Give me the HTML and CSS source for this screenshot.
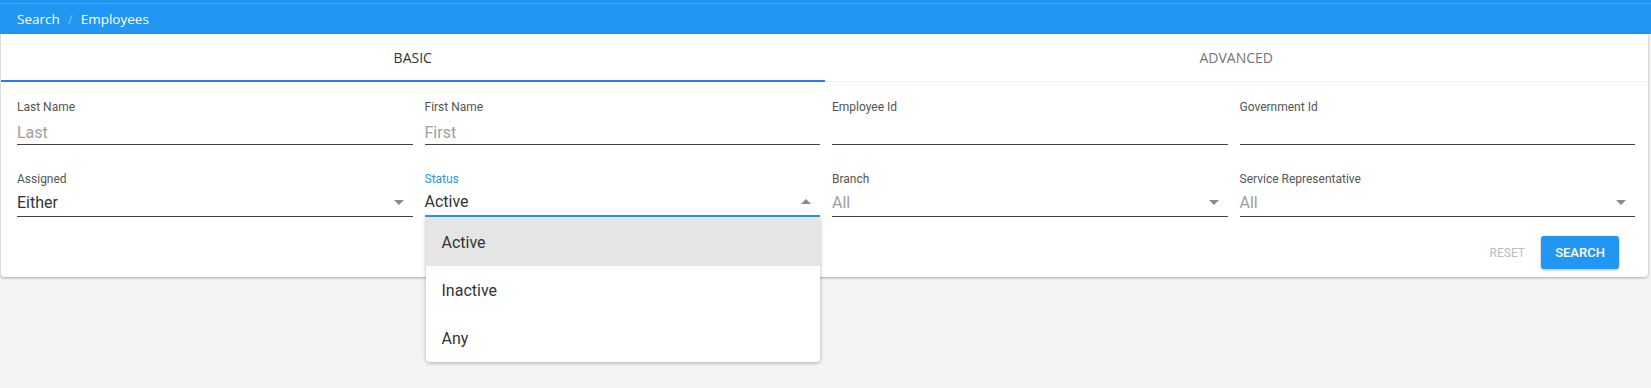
FILE: index.html
```html
<!DOCTYPE html>
<html lang="en">
<head>
    <meta charset="UTF-8">
    <meta name="viewport" content="width=device-width, initial-scale=1.0">
    <title>Search Employees</title>
    <link rel="stylesheet" href="styles.css">
</head>
<body>
    <!-- Breadcrumb bar -->
    <div class="crumb-bar">
        <span>Search</span>
        <span class="crumb-sep">/</span>
        <span>Employees</span>
    </div>

    <div class="card">
        <div class="tabs">
            <div class="tab active">BASIC</div>
            <div class="tab">ADVANCED</div>
        </div>

        <div class="form-grid">
            <div class="field">
                <label>Last Name</label>
                <div class="control text"><span class="placeholder">Last</span></div>
            </div>
            <div class="field">
                <label>First Name</label>
                <div class="control text"><span class="placeholder">First</span></div>
            </div>
            <div class="field">
                <label>Employee Id</label>
                <div class="control text"></div>
            </div>
            <div class="field">
                <label>Government Id</label>
                <div class="control text"></div>
            </div>

            <div class="field">
                <label>Assigned</label>
                <div class="control select"><span>Either</span><i class="caret"></i></div>
            </div>
            <div class="field focused">
                <label>Status</label>
                <div class="control select"><span>Active</span><i class="caret up"></i></div>
                <ul class="menu">
                    <li class="selected">Active</li>
                    <li>Inactive</li>
                    <li>Any</li>
                </ul>
            </div>
            <div class="field">
                <label>Branch</label>
                <div class="control select"><span class="placeholder">All</span><i class="caret"></i></div>
            </div>
            <div class="field">
                <label>Service Representative</label>
                <div class="control select"><span class="placeholder">All</span><i class="caret"></i></div>
            </div>
        </div>

        <div class="actions">
            <button class="btn-flat" disabled>RESET</button>
            <button class="btn-raised">SEARCH</button>
        </div>
    </div>
</body>
</html>
```

FILE: styles.css
```css
/* General styling */
html, body {
    min-height: 100vh;
}

body {
    margin: 0;
    background-color: #f4f4f4;
    font-family: Roboto, "Noto Sans", sans-serif;
    color: #333;
}

.crumb-bar {
    height: 34px;
    padding-left: 17px;
    display: flex;
    align-items: center;
    gap: 8px;
    padding-top: 3px;
    box-sizing: border-box;
    background: linear-gradient(#2196f3 0, #2196f3 3px, #4aa8f5 3px, #4aa8f5 4px, #2196f3 4px);
    color: #fff;
    font-family: "Open Sans", sans-serif;
    font-size: 13.5px;
}

.crumb-sep {
    color: rgba(255, 255, 255, 0.45);
}

.card {
    position: relative;
    background-color: #fff;
    margin-right: 3px;
    border-left: 1px solid #ddd;
    border-radius: 0 0 4px 4px;
    box-shadow: 0 1px 3px rgba(0, 0, 0, 0.3);
    padding-bottom: 8px;
}

.tabs {
    display: flex;
    border-bottom: 1px solid #f0f0f0;
}

.tab {
    flex: 1;
    height: 46px;
    display: flex;
    align-items: center;
    justify-content: center;
    font-family: "Open Sans", sans-serif;
    font-size: 14px;
    color: #757575;
    border-bottom: 2px solid transparent;
    margin-bottom: -1px;
}

.tab.active {
    color: #333;
    border-bottom-color: #2979ff;
}

.form-grid {
    display: grid;
    grid-template-columns: repeat(4, 1fr);
    column-gap: 12px;
    row-gap: 27px;
    padding: 18px 13px 0 16px;
}

.field {
    position: relative;
}

.field label {
    display: block;
    font-size: 12px;
    line-height: 14px;
    color: #555;
}

.control {
    height: 28px;
    margin-top: 2px;
    border-bottom: 1px solid #444;
    display: flex;
    align-items: center;
    justify-content: space-between;
    font-size: 16px;
    color: #333;
    box-sizing: content-box;
}

.control.text {
    height: 24px;
    padding-top: 4px;
}

.placeholder {
    color: #9e9e9e;
}

.caret {
    width: 0;
    height: 0;
    margin-right: 9px;
    border-left: 5px solid transparent;
    border-right: 5px solid transparent;
    border-top: 5px solid #8a8a8a;
}

.caret.up {
    border-top: none;
    border-bottom: 5px solid #8a8a8a;
}

.focused label {
    color: #2196f3;
}

.focused .control {
    height: 27px;
    border-bottom: 2px solid #2196f3;
}

.menu {
    position: absolute;
    top: 46px;
    left: 1px;
    right: 0;
    z-index: 2;
    margin: 0;
    padding: 0;
    list-style: none;
    background-color: #fff;
    border-radius: 0 0 4px 4px;
    box-shadow: 0 1px 4px rgba(0, 0, 0, 0.3);
}

.menu li {
    height: 48px;
    padding-left: 16px;
    display: flex;
    align-items: center;
    font-size: 16px;
    color: #333;
}

.menu li.selected {
    background-color: #e5e5e5;
}

.actions {
    display: flex;
    justify-content: flex-end;
    align-items: center;
    gap: 14px;
    padding: 19px 29px 0 0;
}

button {
    font-family: Roboto, sans-serif;
    font-size: 13px;
    border: none;
    cursor: pointer;
}

.btn-flat {
    background: none;
    color: #bdbdbd;
    font-size: 12px;
    padding: 0 2px;
}

.btn-raised {
    height: 33px;
    width: 78px;
    background-color: #2196f3;
    color: #fff;
    font-weight: 500;
    border-radius: 3px;
    box-shadow: 0 1px 3px rgba(0, 0, 0, 0.3);
}
```
